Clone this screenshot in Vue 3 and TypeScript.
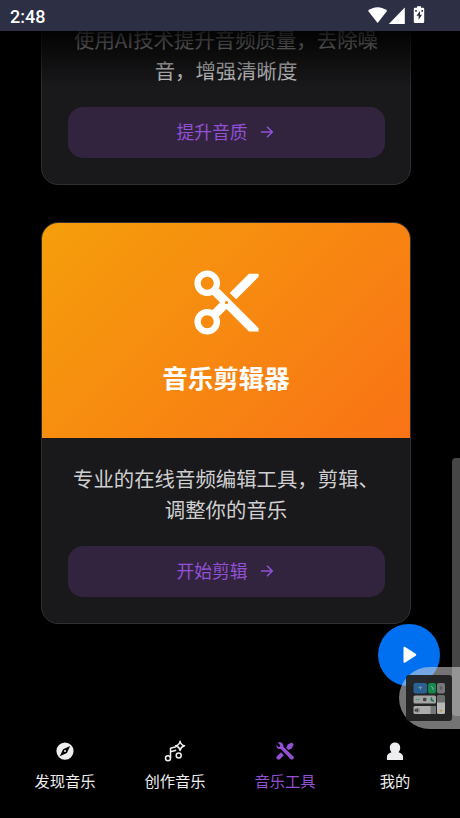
<script setup lang="ts">
interface Tool {
  id: string
  title?: string
  lines: string[]
  action: string
}

const tools: Tool[] = [
  { id: 'enhance', lines: ['使用AI技术提升音频质量，去除噪', '音，增强清晰度'], action: '提升音质' },
  { id: 'cut', title: '音乐剪辑器', lines: ['专业的在线音频编辑工具，剪辑、', '调整你的音乐'], action: '开始剪辑' },
]

const tabs = [
  { id: 'discover', label: '发现音乐' },
  { id: 'create', label: '创作音乐' },
  { id: 'tools', label: '音乐工具' },
  { id: 'me', label: '我的' },
]
</script>

<template>
  <div class="screen">
    <header class="status">
      <span class="time">2:48</span>
      <svg class="status-icons" width="60" height="31" viewBox="0 0 60 31" fill="#fff">
        <path d="M10.600 23 1 10.800c5.400-4.800 13.800-4.800 19.200 0z" />
        <path d="M37.800 7.600V24H21.800z" />
        <path fill-rule="evenodd" d="M48 7.700h2V6.200h4v1.500h2q1.200 0 1.200 1.300v12.800q0 1.300-1.200 1.300h-8q-1.200 0-1.200-1.300V9q0-1.300 1.200-1.300zM53 11l-3.600 4.800h2.200v4l3.500-5H53zM48.200 10v1.800h1.600V10zm6.200 0v1.800H56V10z" />
      </svg>
    </header>

    <main class="content">
      <article v-for="tool in tools" :key="tool.id" class="card">
        <div v-if="tool.title" class="hero">
          <svg class="scissors" width="77" height="77" viewBox="0 0 24 24" fill="#fff">
            <path d="M9.64 7.64c.23-.5.36-1.05.36-1.64 0-2.21-1.79-4-4-4S2 3.79 2 6s1.79 4 4 4c.59 0 1.14-.13 1.64-.36L10 12l-2.36 2.36C7.14 14.13 6.59 14 6 14c-2.21 0-4 1.79-4 4s1.79 4 4 4 4-1.79 4-4c0-.59-.13-1.14-.36-1.64L12 14l7 7h3v-1L9.64 7.64zM6 8c-1.1 0-2-.89-2-2s.9-2 2-2 2 .89 2 2-.9 2-2 2zm0 12c-1.1 0-2-.89-2-2s.9-2 2-2 2 .89 2 2-.9 2-2 2zm6-7.5c-.28 0-.5-.22-.5-.5s.22-.5.5-.5.5.22.5.5-.22.5-.5.5zM19 3l-6 6 2 2 7-7V3z" />
          </svg>
          <h2>{{ tool.title }}</h2>
        </div>
        <div class="body">
          <p><span v-for="line in tool.lines" :key="line">{{ line }}</span></p>
          <button type="button">
            <span>{{ tool.action }}</span>
            <svg width="14" height="14" viewBox="0 0 14 14" fill="none" stroke="currentColor" stroke-width="1.500">
              <path d="M1 7h11.200M7 1.700 12.300 7 7 12.300" />
            </svg>
          </button>
        </div>
      </article>
    </main>
    <div class="top-shade"></div>

    <nav class="tabs">
      <a v-for="tab in tabs" :key="tab.id" class="tab" :class="{ active: tab.id === 'tools' }">
        <svg v-if="tab.id === 'discover'" width="22" height="22" viewBox="0 0 22 22">
          <path fill="currentColor" fill-rule="evenodd" d="M11 2.500a8.600 8.600 0 1 0 0 17.200 8.600 8.600 0 0 0 0-17.200zM16.200 5.900l-3.300 7.100-7.100 3.300 3.300-7.100zM11 10.100a1 1 0 1 1 0 2 1 1 0 0 1 0-2z" />
        </svg>
        <svg v-else-if="tab.id === 'create'" width="22" height="22" viewBox="0 0 22 22" fill="none" stroke="currentColor" stroke-width="1.500" stroke-linejoin="round">
          <circle cx="4" cy="18.200" r="2.500" />
          <circle cx="14.700" cy="15.600" r="2.500" />
          <path d="M6.500 18V8.300l5.500-1.500M6.500 11.700l5.700-1.500" />
          <path d="M16.100 1.300q.8 3.700 4.400 4.500-3.600.9-4.400 4.600-.8-3.700-4.400-4.600 3.600-.8 4.400-4.500z" />
        </svg>
        <svg v-else-if="tab.id === 'tools'" width="22" height="22" viewBox="0 0 22 22" fill="currentColor">
          <path d="M3.800 2.700 6.200 5.100 5.900 6.700 4.400 7 2.400 5C2 8 4.400 9.600 6.900 8.900l9.500 10c1.900 1.800 4.600-.8 2.800-2.700L9.400 6.700C9.900 3.800 6.900 1.400 3.800 2.700z" />
          <path d="m12.200 7.700 1.600-3.200 4-1.900 1.900 1.900-2 4.100-3.300 1.300zM7 12.300l2.900 2.900-4.100 4c-1.900 1.500-4.400-1-2.900-2.900z" />
        </svg>
        <svg v-else width="22" height="22" viewBox="0 0 22 22" fill="currentColor">
          <path d="M11 2.500c-3.100 0-5.200 2.200-5.200 5 0 2 .7 3.600 1.700 4.700-2.600 1-4.600 2.200-4.600 4.700v2.700q0 .5.5.5h15.200q.5 0 .5-.5v-2.700c0-2.500-2-3.700-4.600-4.700 1-1.100 1.700-2.700 1.700-4.700 0-2.800-2.100-5-5.200-5z" />
        </svg>
        <span>{{ tab.label }}</span>
      </a>
    </nav>

    <div class="scrollbar"></div>
    <button class="play" type="button" aria-label="播放">
      <svg width="14" height="18" viewBox="0 0 14 18" fill="#fff"><path d="M.5 2C.5.7 1.300.5 2.200 1l10.500 6.800q1.300.9 0 1.900L2.200 16.500c-.9.6-1.700.1-1.700-1z" /></svg>
    </button>
    <div class="assist">
      <svg width="46" height="46" viewBox="0 0 46 46">
        <rect width="46" height="46" rx="3" fill="#1c1c1d" />
        <rect x="7.500" y="8" width="13.500" height="10.500" rx="2" fill="#235e96" />
        <rect x="22" y="8" width="8" height="10.500" rx="2" fill="#0b8b49" />
        <rect x="31" y="8" width="8" height="10.500" rx="2" fill="#77787a" />
        <rect x="7.500" y="20.500" width="22.500" height="8" rx="1.500" fill="#aaa" />
        <rect x="7.500" y="31" width="22.500" height="8" rx="1.500" fill="#b2b2b2" />
        <path d="M24.500 31H29q1 0 1 1v6q0 1-1 1h-4.500z" fill="#77787a" />
        <rect x="31" y="20.500" width="8" height="18.500" rx="1.500" fill="#c0c0c0" />
        <path d="M32 20.500h6q1 0 1 1v6h-8v-6q0-1 1-1z" fill="#6c6d6f" />
        <path d="M12.500 12.600q1.800-1.500 3.600 0M14.300 12.500v2M25 11l2 2v2" stroke="#91a9ba" fill="none" />
        <path d="M35 11v4M33.700 13h2.600" stroke="#505153" fill="none" />
        <path d="M9.500 24.500h4" stroke="#48a47c" stroke-width="1.200" />
        <rect x="17" y="22.800" width="3.400" height="3.400" rx="1" fill="#3e4145" />
        <path d="M25.500 22.500q-2 4 2.300 3.500-2.700-.8-2.300-3.500z" fill="#087940" stroke="#087940" />
        <path d="M9 34.200h1.500l1.300-1v4l-1.300-1H9zM13 33.700v3" fill="#444" stroke="#444" stroke-width=".7" />
        <path d="M33.500 36.500q1.500-4 3 0z" fill="#d19819" />
      </svg>
    </div>
  </div>
</template>

<style>
html, body { margin: 0; background: #000; }
</style>

<style scoped>
* { box-sizing: border-box; }
.screen {
  position: relative;
  display: flex;
  flex-direction: column;
  width: 460px;
  height: 818px;
  overflow: hidden;
  background: #000;
  color: #eeeef0;
  font-family: "Noto Sans CJK SC", sans-serif;
}
.status {
  position: relative;
  z-index: 3;
  flex: none;
  display: flex;
  justify-content: space-between;
  height: 31px;
  padding: 0 33px 0 10px;
  background: #2d2f45;
}
.time { font: 500 18px/33px Roboto, sans-serif; color: #fff; }
.content {
  flex: 1;
  min-height: 0;
  display: flex;
  flex-direction: column;
  justify-content: flex-end;
  gap: 37px;
  width: 370px;
  margin-left: 41px;
  padding-bottom: 87px;
}
.card {
  flex: none;
  overflow: hidden;
  border: 1px solid #303033;
  border-radius: 17px;
  background: #19191b;
}
.hero {
  display: flex;
  flex-direction: column;
  align-items: center;
  height: 215.500px;
  padding-top: 41px;
  background: linear-gradient(135deg, #f59e0b, #f97316);
}
.scissors { flex: none; }
h2 { margin: 18px 0 0; font-size: 25.500px; line-height: 36px; font-weight: 700; color: #fff; }
.body { padding: 25px 26px 26px; }
p {
  margin: 0 -10px 21.500px;
  text-align: center;
  font-size: 20.400px;
  line-height: 30.600px;
  color: #cfcfd1;
}
p span { display: block; white-space: nowrap; }
.card button {
  display: flex;
  align-items: center;
  justify-content: center;
  gap: 12px;
  width: 317px;
  height: 51px;
  padding: 0 3px 3px 0;
  border: 0;
  border-radius: 15px;
  background: #32243f;
  color: #9250d4;
  font: 400 17.800px/26px "Noto Sans CJK SC", sans-serif;
}
.card button svg { position: relative; top: 1px; }
.top-shade {
  position: absolute;
  z-index: 2;
  inset: 31px 0 auto;
  height: 56px;
  background: linear-gradient(rgba(0, 0, 0, .9), transparent);
}
.tabs {
  flex: 0 0 107px;
  display: grid;
  grid-template-columns: repeat(4, 110px);
  padding: 29px 10px 0;
}
.tab {
  display: flex;
  flex-direction: column;
  align-items: center;
  gap: 7px;
  font-size: 15.300px;
  line-height: 22px;
}
.tab.active { color: #9250d4; }
.scrollbar {
  position: absolute;
  right: 0;
  top: 458px;
  width: 8px;
  height: 258px;
  border-radius: 4px 0 0 4px;
  background: #464646;
}
.play {
  position: absolute;
  left: 378px;
  top: 623.500px;
  display: flex;
  align-items: center;
  justify-content: center;
  width: 62px;
  height: 62px;
  padding: 0 0 0 2px;
  border: 0;
  border-radius: 50%;
  background: #0070f0;
}
.assist {
  position: absolute;
  left: 398.500px;
  top: 667px;
  width: 62px;
  height: 61.500px;
  padding: 8px 0 0 7.500px;
  border-radius: 31px 0 0 31px;
  background: rgba(220, 220, 220, .53);
}
.assist svg { display: block; opacity: .9; }
</style>
